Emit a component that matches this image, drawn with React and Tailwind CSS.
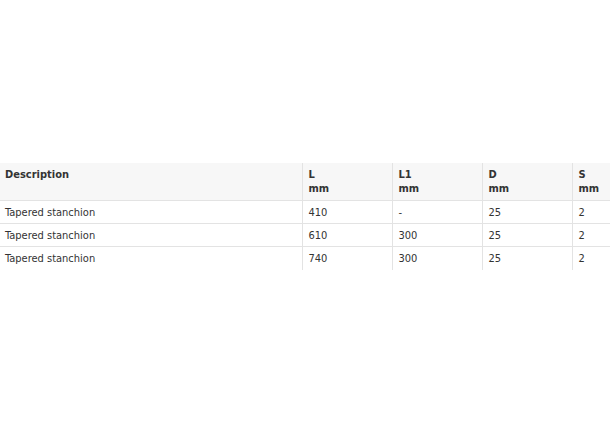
export default function App() {
  const rows = [
    ["Tapered stanchion", "410", "-", "25", "2"],
    ["Tapered stanchion", "610", "300", "25", "2"],
    ["Tapered stanchion", "740", "300", "25", "2"],
  ];
  const font = { fontFamily: '"DejaVu Sans Condensed", "DejaVu Sans", Tahoma, sans-serif' };
  return (
    <div className="w-[610px] h-[441px] bg-white overflow-hidden pt-[163px] text-[#333]" style={font}>
      <table className="w-[610px] border-collapse text-[11px] leading-[14px] table-fixed">
        <colgroup>
          <col className="w-[302px]" />
          <col className="w-[90px]" />
          <col className="w-[90px]" />
          <col className="w-[90px]" />
          <col className="w-[38px]" />
        </colgroup>
        <thead>
          <tr className="bg-[#f7f7f7] border-b border-[#e3e3e3]">
            <th className="text-left align-top font-bold px-[5px] pt-[5px] pb-[4px] h-[37px]">Description</th>
            {["L", "L1", "D", "S"].map((h) => (
              <th key={h} className="text-left align-top font-bold px-[6px] pt-[5px] pb-[4px] border-l border-[#e3e3e3]">
                {h}
                <br />
                mm
              </th>
            ))}
          </tr>
        </thead>
        <tbody>
          {rows.map((r, i) => (
            <tr key={i} className={i < rows.length - 1 ? "border-b border-[#e3e3e3]" : ""}>
              {r.map((c, j) => (
                <td
                  key={j}
                  className={`text-left h-[23px] pt-[1px] pb-0 ${j === 0 ? "px-[5px]" : "px-[6px] border-l border-[#e3e3e3]"}`}
                >
                  {c}
                </td>
              ))}
            </tr>
          ))}
        </tbody>
      </table>
    </div>
  );
}
